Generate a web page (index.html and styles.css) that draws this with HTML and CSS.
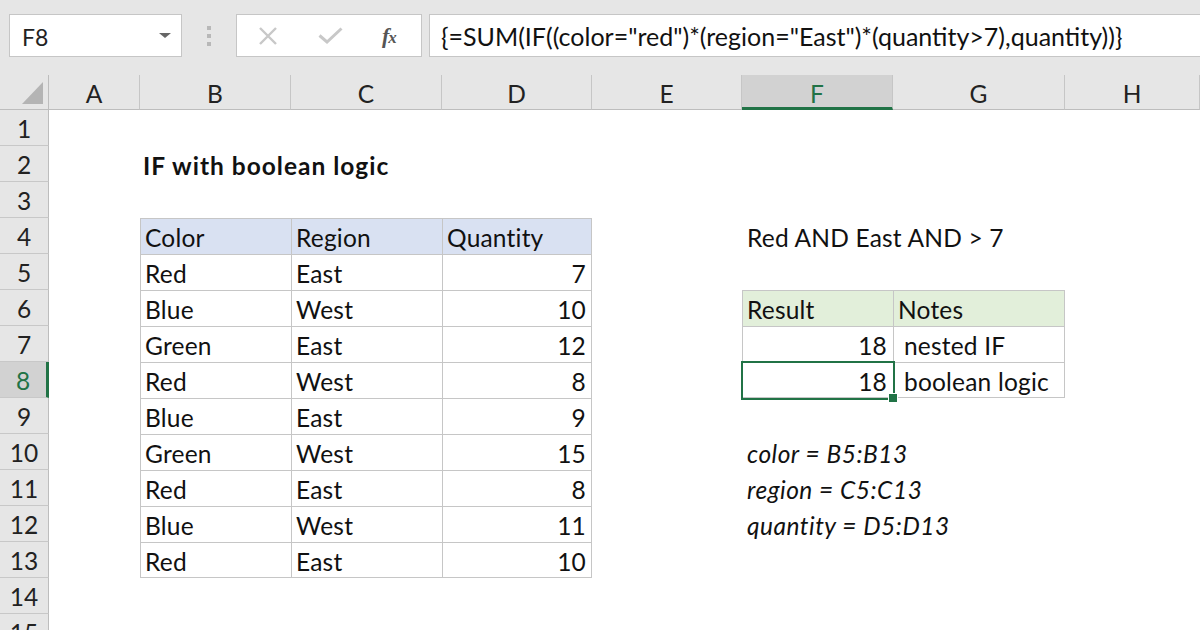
FILE: index.html
```html
<!DOCTYPE html>
<html lang="en">
<head>
<meta charset="utf-8">
<title>IF with boolean logic</title>
<link rel="stylesheet" href="styles.css">
</head>
<body>
<div class="app">
  <div class="fbar">
    <div class="namebox"><span class="nb-text">F8</span><span class="caret"></span></div>
    <div class="grip"><i></i><i></i><i></i></div>
    <div class="btns">
      <svg class="ico-x" width="20" height="18" viewBox="0 0 20 18"><path d="M2 1 L18 17 M18 1 L2 17" stroke="#c8c8c8" stroke-width="2.4" fill="none"/></svg>
      <svg class="ico-ok" width="25" height="17" viewBox="0 0 25 17"><path d="M1.5 8.5 L9 15 L23.5 1.5" stroke="#c8c8c8" stroke-width="3" fill="none"/></svg>
      <span class="fx">f<span class="fx-x">x</span></span>
    </div>
    <div class="formula">{=SUM(IF((color="red")*(region="East")*(quantity&gt;7),quantity))}</div>
  </div>
  <div class="sheet">
    <div class="corner"><span class="tri"></span></div>
    <div class="ch">A</div><div class="ch">B</div><div class="ch">C</div><div class="ch">D</div><div class="ch">E</div><div class="ch sel">F</div><div class="ch">G</div><div class="ch">H</div>

    <div class="rh">1</div><div class="c"></div><div class="c"></div><div class="c"></div><div class="c"></div><div class="c"></div><div class="c"></div><div class="c"></div><div class="c"></div>

    <div class="rh">2</div><div class="c"></div><div class="c title">IF with boolean logic</div><div class="c"></div><div class="c"></div><div class="c"></div><div class="c"></div><div class="c"></div><div class="c"></div>

    <div class="rh">3</div><div class="c"></div><div class="c"></div><div class="c"></div><div class="c"></div><div class="c"></div><div class="c"></div><div class="c"></div><div class="c"></div>

    <div class="rh">4</div><div class="c"></div><div class="c t hb">Color</div><div class="c t hb">Region</div><div class="c t tr hb">Quantity</div><div class="c"></div><div class="c">Red AND East AND &gt; 7</div><div class="c"></div><div class="c"></div>

    <div class="rh">5</div><div class="c"></div><div class="c t">Red</div><div class="c t">East</div><div class="c t tr n">7</div><div class="c"></div><div class="c"></div><div class="c"></div><div class="c"></div>

    <div class="rh">6</div><div class="c"></div><div class="c t">Blue</div><div class="c t">West</div><div class="c t tr n">10</div><div class="c"></div><div class="c t hg">Result</div><div class="c t tr hg">Notes</div><div class="c"></div>

    <div class="rh">7</div><div class="c"></div><div class="c t">Green</div><div class="c t">East</div><div class="c t tr n">12</div><div class="c"></div><div class="c t n">18</div><div class="c t tr note">nested IF</div><div class="c"></div>

    <div class="rh sel">8</div><div class="c"></div><div class="c t">Red</div><div class="c t">West</div><div class="c t tr n">8</div><div class="c"></div><div class="c t tb n active">18</div><div class="c t tr tb note">boolean logic</div><div class="c"></div>

    <div class="rh">9</div><div class="c"></div><div class="c t">Blue</div><div class="c t">East</div><div class="c t tr n">9</div><div class="c"></div><div class="c"></div><div class="c"></div><div class="c"></div>

    <div class="rh">10</div><div class="c"></div><div class="c t">Green</div><div class="c t">West</div><div class="c t tr n">15</div><div class="c"></div><div class="c it">color = B5:B13</div><div class="c"></div><div class="c"></div>

    <div class="rh">11</div><div class="c"></div><div class="c t">Red</div><div class="c t">East</div><div class="c t tr n">8</div><div class="c"></div><div class="c it">region = C5:C13</div><div class="c"></div><div class="c"></div>

    <div class="rh">12</div><div class="c"></div><div class="c t">Blue</div><div class="c t">West</div><div class="c t tr n">11</div><div class="c"></div><div class="c it">quantity = D5:D13</div><div class="c"></div><div class="c"></div>

    <div class="rh">13</div><div class="c"></div><div class="c t tb">Red</div><div class="c t tb">East</div><div class="c t tr tb n">10</div><div class="c"></div><div class="c"></div><div class="c"></div><div class="c"></div>

    <div class="rh">14</div><div class="c"></div><div class="c"></div><div class="c"></div><div class="c"></div><div class="c"></div><div class="c"></div><div class="c"></div><div class="c"></div>

    <div class="rh">15</div><div class="c"></div><div class="c"></div><div class="c"></div><div class="c"></div><div class="c"></div><div class="c"></div><div class="c"></div><div class="c"></div>
  </div>
</div>
</body>
</html>
```

FILE: styles.css
```css
* { box-sizing: border-box; }
html, body { margin: 0; padding: 0; }
body {
  width: 1200px;
  height: 630px;
  overflow: hidden;
  background: #e6e6e6;
  font-family: Lato, "Liberation Sans", sans-serif;
  color: #111;
}
.app { width: 1200px; height: 630px; overflow: hidden; }

/* formula bar */
.fbar {
  height: 75px;
  display: flex;
  align-items: flex-start;
  padding: 14px 0 0 9px;
  background: #e6e6e6;
  overflow: hidden;
}
.namebox {
  width: 173px;
  height: 43px;
  background: #fff;
  border: 1px solid #c6c6c6;
  display: flex;
  align-items: center;
  justify-content: space-between;
  padding: 0 10px 0 12px;
}
.nb-text { font-size: 23px; color: #222; padding-top: 2px; }
.caret {
  width: 0; height: 0;
  border-left: 6px solid transparent;
  border-right: 6px solid transparent;
  border-top: 5px solid #666;
}
.grip {
  width: 54px;
  height: 43px;
  display: flex;
  flex-direction: column;
  align-items: center;
  justify-content: center;
  gap: 4px;
}
.grip i { display: block; width: 4px; height: 4px; background: #b8b8b8; }
.btns {
  width: 186px;
  height: 43px;
  background: #fff;
  border: 1px solid #c6c6c6;
  display: flex;
  align-items: center;
  padding: 0 0 0 21px;
}
.ico-ok { margin-left: 40px; }
.fx {
  margin-left: 39px;
  font-family: "Liberation Serif", serif;
  font-style: italic;
  font-weight: bold;
  font-size: 22px;
  color: #555;
  letter-spacing: -1px;
}
.fx-x { font-size: 17px; }
.formula {
  flex: 1;
  height: 43px;
  margin-left: 7px;
  margin-right: -10px;
  background: #fff;
  border: 1px solid #c6c6c6;
  font-size: 25px;
  line-height: 43px;
  padding-left: 11px;
  color: #111;
  white-space: nowrap;
}

/* sheet */
.sheet {
  display: grid;
  grid-template-columns: 49px 91px 151px 151px 150px 150px 151px 172px 1fr;
  grid-template-rows: 35px;
  grid-auto-rows: 36px;
  background: #fff;
  font-size: 24.5px;
  letter-spacing: 0.2px;
}
.corner {
  background: #e6e6e6;
  border-right: 1px solid #bdbdbd;
  border-bottom: 1px solid #bdbdbd;
  position: relative;
}
.tri {
  position: absolute;
  left: 22px;
  top: 7px;
  width: 0; height: 0;
  border-left: 21px solid transparent;
  border-bottom: 22px solid #b4b4b4;
}
.ch {
  background: #e6e6e6;
  border-right: 1px solid #c6c6c6;
  border-bottom: 1px solid #bdbdbd;
  text-align: center;
  padding-top: 2px;
  line-height: 33px;
  color: #222;
  letter-spacing: 0;
}
.ch.sel {
  background: #d2d2d2;
  border-bottom: 3px solid #217346;
  color: #217346;
}
.rh {
  background: #e6e6e6;
  border-right: 1px solid #bdbdbd;
  border-bottom: 1px solid #c8c8c8;
  text-align: center;
  padding-top: 3px;
  line-height: 32px;
  color: #222;
  letter-spacing: 0;
}
.rh.sel {
  background: #d2d2d2;
  border-right: 3px solid #217346;
  color: #217346;
}
.c {
  padding: 3px 5px 0;
  line-height: 33px;
  white-space: nowrap;
  overflow: visible;
  color: #111;
}
.title { font-weight: bold; padding-left: 3px; letter-spacing: 1px; }
.t { box-shadow: inset 1px 1px 0 #c6c6c6; }
.t.tr { box-shadow: inset 1px 1px 0 #c6c6c6, inset -1px 0 0 #c6c6c6; }
.t.tb { box-shadow: inset 1px 1px 0 #c6c6c6, inset 0 -1px 0 #c6c6c6; }
.t.tr.tb { box-shadow: inset 1px 1px 0 #c6c6c6, inset -1px -1px 0 #c6c6c6; }
.hb { background: #d9e1f2; }
.hg { background: #e2efda; }
.n { text-align: right; padding-right: 6px; }
.note { padding-left: 11px; }
.it { font-style: italic; letter-spacing: 0.5px; }
.active { position: relative; }
.active::after {
  content: "";
  position: absolute;
  left: -1px; top: -1px; right: -2px; bottom: -2px;
  border: 2px solid #217346;
}
.active::before {
  content: "";
  position: absolute;
  right: -5px;
  bottom: -5px;
  width: 8px;
  height: 8px;
  background: #217346;
  border: 1px solid #fff;
  z-index: 2;
}
```
